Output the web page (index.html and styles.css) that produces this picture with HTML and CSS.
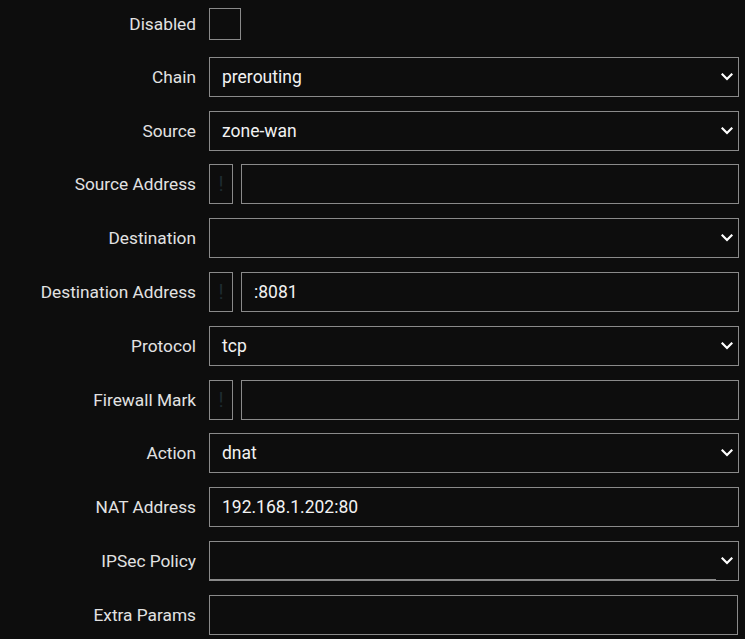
FILE: index.html
```html
<!DOCTYPE html>
<html>
<head>
<meta charset="utf-8">
<link rel="stylesheet" href="styles.css">
</head>
<body>
<form class="form">
  <label class="lbl">Disabled</label>
  <div class="ctl"><span class="check"></span></div>

  <label class="lbl">Chain</label>
  <div class="ctl sel"><span class="val">prerouting</span><svg class="chev" viewBox="0 0 12 8"><path d="M1.5 1.5 6 6 10.5 1.5" /></svg></div>

  <label class="lbl">Source</label>
  <div class="ctl sel"><span class="val">zone-wan</span><svg class="chev" viewBox="0 0 12 8"><path d="M1.5 1.5 6 6 10.5 1.5" /></svg></div>

  <label class="lbl">Source Address</label>
  <div class="ctl pair"><span class="neg">!</span><span class="box"></span></div>

  <label class="lbl">Destination</label>
  <div class="ctl sel"><span class="val"></span><svg class="chev" viewBox="0 0 12 8"><path d="M1.5 1.5 6 6 10.5 1.5" /></svg></div>

  <label class="lbl">Destination Address</label>
  <div class="ctl pair"><span class="neg">!</span><span class="box"><span class="val">:8081</span></span></div>

  <label class="lbl">Protocol</label>
  <div class="ctl sel"><span class="val">tcp</span><svg class="chev" viewBox="0 0 12 8"><path d="M1.5 1.5 6 6 10.5 1.5" /></svg></div>

  <label class="lbl">Firewall Mark</label>
  <div class="ctl pair"><span class="neg">!</span><span class="box"></span></div>

  <label class="lbl">Action</label>
  <div class="ctl sel"><span class="val">dnat</span><svg class="chev" viewBox="0 0 12 8"><path d="M1.5 1.5 6 6 10.5 1.5" /></svg></div>

  <label class="lbl">NAT Address</label>
  <div class="ctl box"><span class="val">192.168.1.202:80</span></div>

  <label class="lbl">IPSec Policy</label>
  <div class="ctl sel ipsec"><span class="val"></span><svg class="chev" viewBox="0 0 12 8"><path d="M1.5 1.5 6 6 10.5 1.5" /></svg></div>

  <label class="lbl">Extra Params</label>
  <div class="ctl box extra"></div>
</form>
</body>
</html>
```

FILE: styles.css
```css
html, body {
  margin: 0;
  padding: 0;
  background: #0d0d0d;
}
body {
  font-family: Roboto, "Liberation Sans", sans-serif;
  color: #e6e6e6;
}
.form {
  display: grid;
  grid-template-columns: 196px 530px;
  grid-template-rows: 39px;
  grid-auto-rows: 40px;
  column-gap: 13px;
  row-gap: 13.8px;
  padding: 4px 0 0 0;
  align-items: center;
}
.lbl {
  text-align: right;
  font-size: 17.3px;
  color: #e2e2e2;
  line-height: 20px;
}
.ctl {
  height: 40px;
  box-sizing: border-box;
  display: flex;
  align-items: center;
  font-size: 17.5px;
  color: #f2f2f2;
}
.check {
  width: 32px;
  height: 32px;
  box-sizing: border-box;
  border: 1px solid #8a8a8a;
}
.sel, .box {
  border: 1px solid #8a8a8a;
  padding: 0 5px 0 12px;
  justify-content: space-between;
}
.val {
  line-height: 20px;
}
.chev {
  width: 12px;
  height: 8px;
  fill: none;
  stroke: #ffffff;
  stroke-width: 2.2;
  stroke-linecap: square;
}
.pair {
  gap: 8px;
  align-items: stretch;
}
.neg {
  width: 24px;
  box-sizing: border-box;
  border: 1px solid #8a8a8a;
  display: flex;
  align-items: center;
  justify-content: center;
  color: #1e2b30;
  font-size: 20px;
}
.pair .box {
  flex: 1;
  display: flex;
  align-items: center;
}
.ipsec {
  background: linear-gradient(#8a8a8a, #8a8a8a) no-repeat left bottom / calc(100% - 22px) 1px;
}
.extra {
  width: 529px;
}
```
